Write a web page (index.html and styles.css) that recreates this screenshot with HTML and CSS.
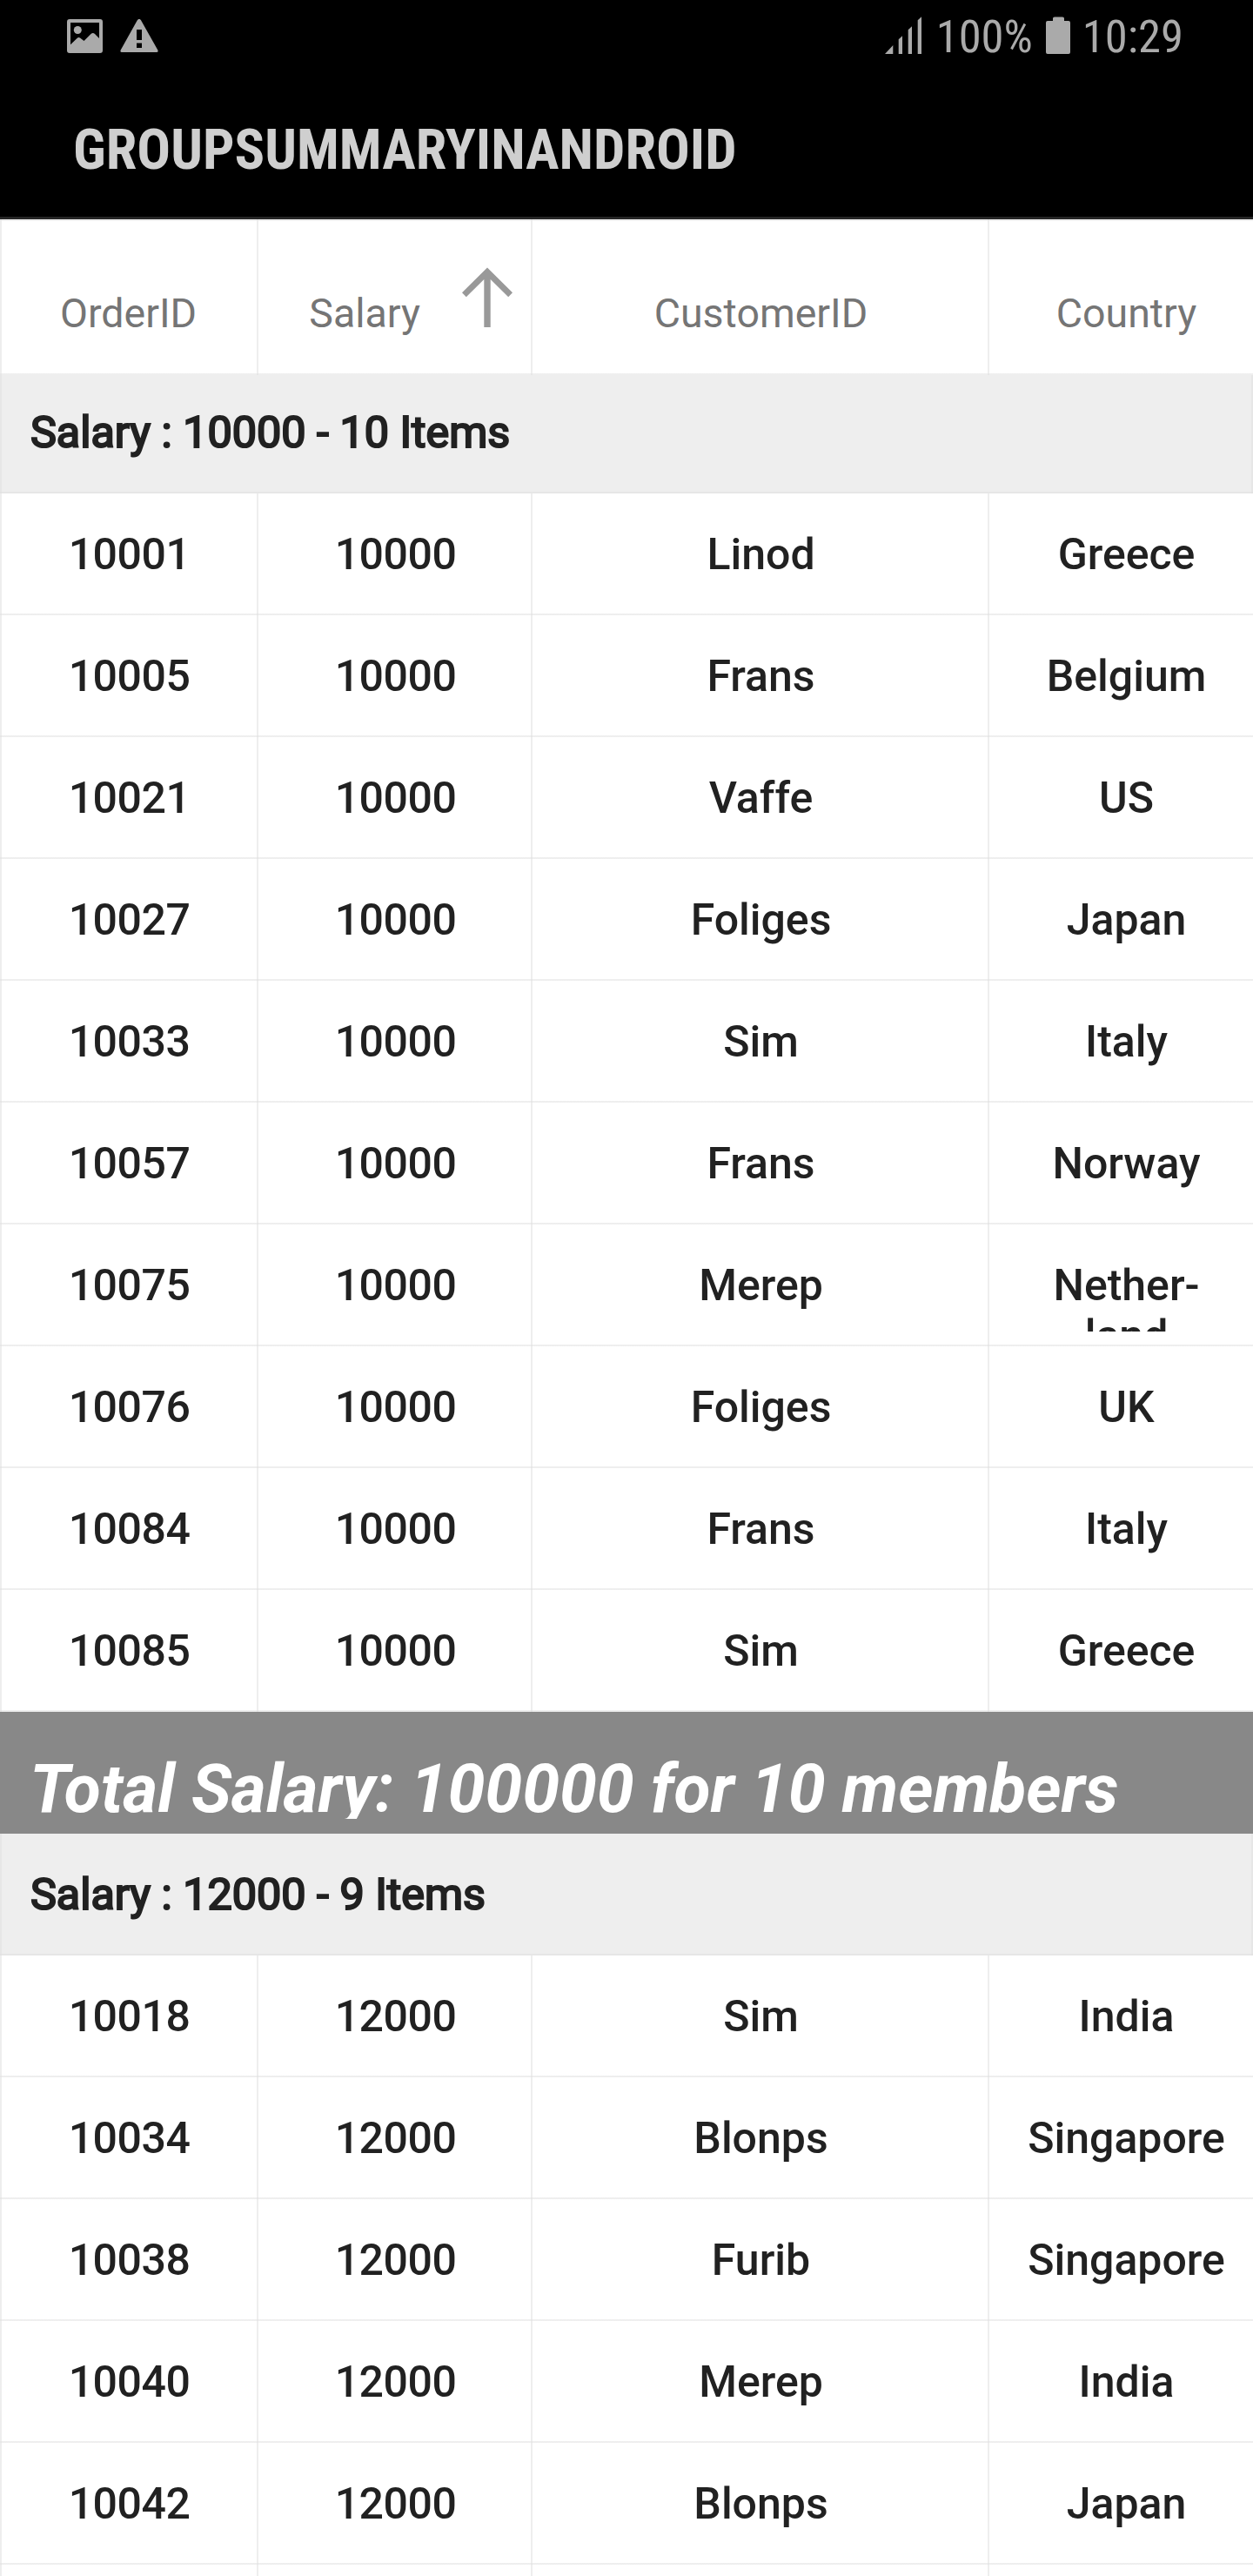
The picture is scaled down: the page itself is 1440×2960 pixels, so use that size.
FILE: index.html
```html
<!DOCTYPE html>
<html lang="en">
<head>
<meta charset="utf-8">
<title>GroupSummaryInAndroid</title>
<link rel="stylesheet" href="styles.css">
</head>
<body>
<div class="screen">
  <header class="top">
    <div class="status">
      <svg class="icon-image" width="41" height="39" viewBox="0 0 41 39"><path fill="#aaa" fill-rule="evenodd" d="M3 0H38Q41 0 41 3V36Q41 39 38 39H3Q0 39 0 36V3Q0 0 3 0ZM4 4V29.3L11.8 21.8Q13.3 20.2 15 21.5L19.5 25L27.5 17Q29.8 15 32 17L37 22V4Z"/><circle cx="12.3" cy="12.5" r="4.5" fill="#aaa"/></svg>
      <svg class="icon-warning" width="44" height="39" viewBox="0 0 44 39"><path fill="#aaa" fill-rule="evenodd" d="M19.8 1.2Q22 -1.5 24 1.2L43.3 35.5Q44.3 38 42 38H2Q-.3 38 .7 35.5ZM19 12V24H25V12ZM19 27.5V33H25V27.5Z"/></svg>
      <svg class="icon-signal" width="42" height="43" viewBox="0 0 42 43"><path fill="#aaa" d="M0 43L9.3 33V43ZM15.7 43V26.3L20 22.3V43ZM26.7 43V15.2L31 11.2V43ZM37.7 43V4.2L42 .2V43Z"/></svg>
      <span class="battery-level">100%</span>
      <svg class="icon-battery" width="28" height="43" viewBox="0 0 28 43"><path fill="#aaa" d="M8 5V2Q8 .4 10 .4H19Q21 .4 21 2V5H26Q28 5 28 7V41Q28 43 26 43H2Q0 43 0 41V7Q0 5 2 5Z"/></svg>
      <span class="clock">10:29</span>
    </div>
    <h1 class="title">GROUPSUMMARYINANDROID</h1>
  </header>

  <main class="grid">
    <div class="row head"><div class="cell">OrderID</div><div class="cell sorted"><span>Salary</span><svg class="sort" width="58" height="69" viewBox="0 0 58 69"><path fill="#999" d="M29 .5L58 29.3L53.2 34.3L32.7 14V69H25.3V14L4.8 34.3L0 29.3Z"/></svg></div><div class="cell">CustomerID</div><div class="cell">Country</div></div>

    <div class="group first">Salary : 10000 - 10 Items</div>
    <div class="row"><div class="cell num">10001</div><div class="cell num">10000</div><div class="cell">Linod</div><div class="cell">Greece</div></div>
    <div class="row"><div class="cell num">10005</div><div class="cell num">10000</div><div class="cell">Frans</div><div class="cell">Belgium</div></div>
    <div class="row"><div class="cell num">10021</div><div class="cell num">10000</div><div class="cell">Vaffe</div><div class="cell">US</div></div>
    <div class="row"><div class="cell num">10027</div><div class="cell num">10000</div><div class="cell">Foliges</div><div class="cell">Japan</div></div>
    <div class="row"><div class="cell num">10033</div><div class="cell num">10000</div><div class="cell">Sim</div><div class="cell">Italy</div></div>
    <div class="row"><div class="cell num">10057</div><div class="cell num">10000</div><div class="cell">Frans</div><div class="cell">Norway</div></div>
    <div class="row"><div class="cell num">10075</div><div class="cell num">10000</div><div class="cell">Merep</div><div class="cell"><div class="clip">Nether-<br>land</div></div></div>
    <div class="row"><div class="cell num">10076</div><div class="cell num">10000</div><div class="cell">Foliges</div><div class="cell">UK</div></div>
    <div class="row"><div class="cell num">10084</div><div class="cell num">10000</div><div class="cell">Frans</div><div class="cell">Italy</div></div>
    <div class="row"><div class="cell num">10085</div><div class="cell num">10000</div><div class="cell">Sim</div><div class="cell">Greece</div></div>
    <div class="summary"><div class="summary-text">Total Salary: 100000 for 10 members</div></div>

    <div class="group">Salary : 12000 - 9 Items</div>
    <div class="row"><div class="cell num">10018</div><div class="cell num">12000</div><div class="cell">Sim</div><div class="cell">India</div></div>
    <div class="row"><div class="cell num">10034</div><div class="cell num">12000</div><div class="cell">Blonps</div><div class="cell">Singapore</div></div>
    <div class="row"><div class="cell num">10038</div><div class="cell num">12000</div><div class="cell">Furib</div><div class="cell">Singapore</div></div>
    <div class="row"><div class="cell num">10040</div><div class="cell num">12000</div><div class="cell">Merep</div><div class="cell">India</div></div>
    <div class="row"><div class="cell num">10042</div><div class="cell num">12000</div><div class="cell">Blonps</div><div class="cell">Japan</div></div>
    <div class="row"><div class="cell"></div><div class="cell"></div><div class="cell"></div><div class="cell"></div></div>
  </main>
</div>
</body>
</html>
```
FILE: styles.css
```css
:root {
  --line: rgba(222, 222, 222, 0.5);
}

* {
  box-sizing: border-box;
}

body {
  margin: 0;
  background: #fff;
  font-family: Roboto, sans-serif;
}

.screen {
  width: 1440px;
  height: 2960px;
  overflow: hidden;
}

.top {
  height: 252px;
  background: #000;
  border-bottom: 3px solid #262626;
}

.status {
  display: flex;
  align-items: flex-start;
  height: 84px;
  padding: 0 80px 0 77px;
  color: #aaa;
  font-size: 52.6px;
  font-stretch: 75%;
  line-height: 84px;
}

.status svg {
  flex: none;
}

.icon-image {
  margin-top: 22px;
}

.icon-warning {
  margin: 22px 0 0 20px;
}

.icon-signal {
  margin: 19px 17px 0 auto;
}

.icon-battery {
  margin: 19px 14px 0 15px;
}

.title {
  margin: 0;
  padding-left: 84px;
  color: #cfcfcf;
  font-size: 64.4px;
  font-stretch: 75%;
  font-weight: 700;
  line-height: 176px;
}

.row {
  display: grid;
  grid-template-columns: 297px 315px 525px 315px;
  height: 140px;
  color: #212121;
  font-size: 50px;
  font-weight: 500;
  line-height: 58px;
  text-align: center;
  background: linear-gradient(var(--line), var(--line)) bottom / 100% 2px no-repeat;
  box-shadow: inset 2px 0 var(--line);
}

.cell {
  height: 100%;
  padding-top: 41px;
  box-shadow: inset -2px 0 var(--line);
}

.num {
  letter-spacing: -0.5px;
}

.clip {
  height: 82px;
  overflow: hidden;
}

.head {
  height: 179px;
  color: #757575;
  font-size: 46.5px;
  font-weight: 400;
  background:
    linear-gradient(var(--line), var(--line)) top / 100% 2px no-repeat,
    linear-gradient(var(--line), var(--line)) bottom / 100% 2px no-repeat;
}

.head .cell {
  padding-top: 79px;
}

.head .cell:first-child {
  padding-right: 2px;
}

.head .sorted {
  display: flex;
  justify-content: flex-end;
  gap: 48px;
  padding-top: 55px;
  padding-right: 23px;
}

.sorted span {
  padding-top: 24px;
}

.group {
  height: 140px;
  padding: 41px 0 0 35px;
  color: #212121;
  font-size: 50.3px;
  line-height: 58px;
  -webkit-text-stroke: 2.2px #212121;
  background: linear-gradient(var(--line), var(--line)) bottom / 100% 2px no-repeat #eee;
  box-shadow: inset 2px 0 var(--line), inset -2px 0 var(--line);
}

.first {
  height: 136px;
  padding-top: 37px;
}

.summary {
  height: 140px;
  padding: 44px 0 17px 34px;
  background: #888;
}

.summary-text {
  height: 79px;
  overflow: hidden;
  color: #fff;
  font-size: 77px;
  font-style: italic;
  font-weight: 700;
  line-height: 90px;
  white-space: nowrap;
}
```
